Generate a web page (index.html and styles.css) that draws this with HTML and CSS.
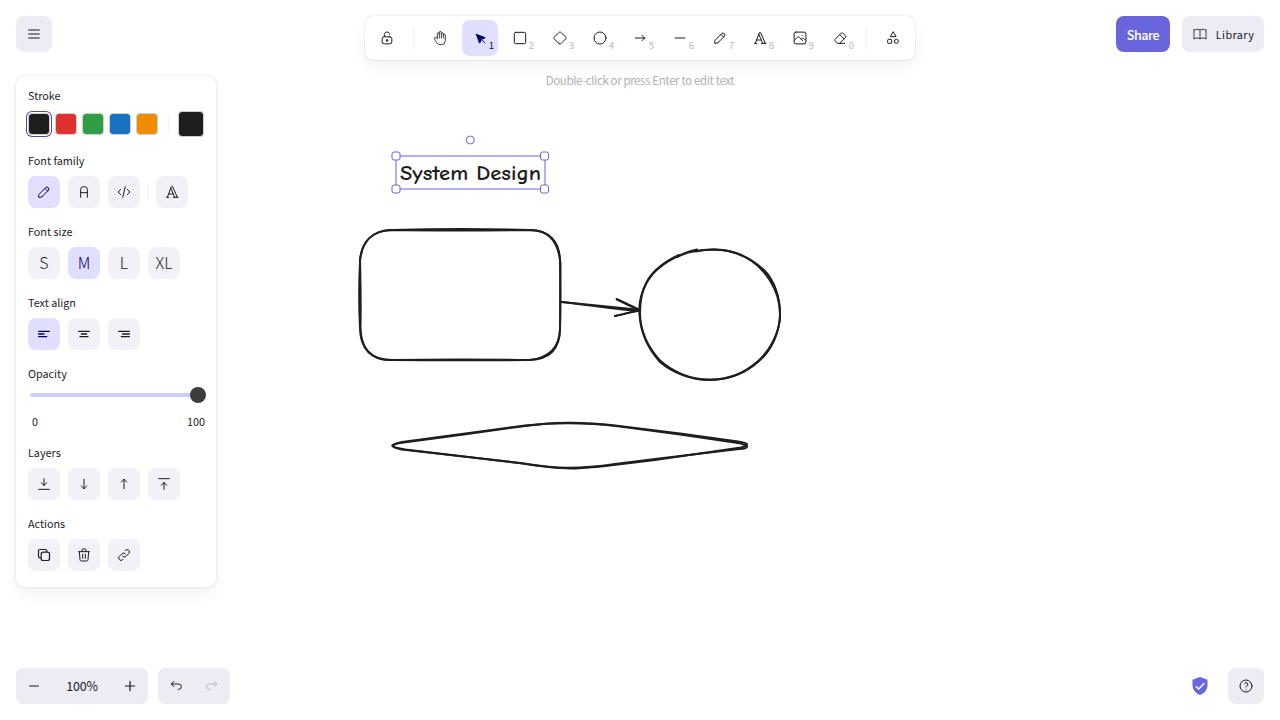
FILE: index.html
```
<!DOCTYPE html>
<html lang="en">
<head>
<meta charset="utf-8">
<title>Whiteboard</title>
<link rel="stylesheet" href="styles.css">
</head>
<body>

<svg class="board" width="1280" height="720" viewBox="0 0 1280 720">
	<!-- rounded box -->
	<g class="sketch">
		<path d="M392 230 C440 228.600 490 228.800 529 230 C549 230 560 241 560 262 C560.500 285 560.500 307 560 328 C560 349 549 360 528 360 C480 360.500 437 360.500 392 360 C371 360 360.500 349 360 328 C358.800 304 359 281 360 262 C361 242 372 230.500 392 230"/>
		<path d="M390 230 C440 230.800 490 230.500 532 230 C551 231 559 244 560.500 264 C560 287 560.500 310 560 330 C559 350 547 358 530 360 C480 359.200 437 359.200 390 360 C370 360 360 347 360.500 326 C361 304 360.500 281 360 260 C362 241 373 231 390 230"/>
	</g>
	<!-- arrow -->
	<g class="sketch">
		<path d="M560 301.700 C584 304.500 611 308.500 638 311"/>
		<path d="M561 302 C588 304.500 613 307 640 310"/>
		<path d="M616.500 299 C624 302.500 631 306 639 309.500"/>
		<path d="M617 299.500 C625 303 632 307 640 311"/>
		<path d="M615 316 C623 314.500 631 312 639 310"/>
		<path d="M615 316 C624 313.500 631 312.500 640 310.500"/>
	</g>
	<!-- circle -->
	<g class="sketch">
		<path d="M677.500 257 C688 251 701 249.500 714 249.500 C733 250 751 258 764 270 C775 281 780 298 780 314 C780 331 772 350 759 361 C746 373 728 380 709 380 C691 380 673 373 660 362 C649 350 641 334 639.500 315 C638 298 645 281 656 270.500 C666 261.500 675 257 683 254 C687 252 692 250.500 697 249.500"/>
		<path d="M695.500 251.500 C708 249 724 249 736 253 C750 258 762 267.500 770 280.500 C776 290 780.500 303 780 317 C779 333 770 351 757 362 C743 374 726 380 709 379.500 C690 379.500 672 371.500 659.500 360 C648 347 640 330 640 313 C640 295 644 281 656 270 C663 263.500 671 258.500 679 255"/>
	</g>
	<!-- diamond -->
	<g class="sketch">
		<path d="M400 443 L460 435 L521 426.500 C556 422 579 421.500 615 425.500 L680 433.500 L738 441.500 C749 443 750 445 741 447.500 L655 460 L622 464 C574 470 565 470 523 463.500 L405 449.500 C389 447 389 445 400 443"/>
		<path d="M402 442 L525 425.500 C557 422 583 422 620 426.500 L680 434.500 L738 443 C750 445.500 750 448.500 739 449 L655 459 L615 464 C578 469.500 558 469 520 463 L402 449.500 C390 447 391 444 402 442"/>
	</g>
	<text class="board-title" x="400" y="179.500" textLength="141" lengthAdjust="spacingAndGlyphs">System Design</text>
	<!-- selection frame -->
	<g class="selection">
		<rect x="396" y="156" width="149" height="33"/>
		<g class="handles">
			<rect x="392" y="152" width="8" height="8" rx="2"/>
			<rect x="540.500" y="152" width="8" height="8" rx="2"/>
			<rect x="392" y="185" width="8" height="8" rx="2"/>
			<rect x="540.500" y="185" width="8" height="8" rx="2"/>
			<circle cx="470.300" cy="140" r="4"/>
		</g>
	</g>
</svg>

<div class="ui">
	<div class="top">
		<div class="left">
			<button class="btn" aria-label="Menu"><svg class="icon w15" viewBox="0 0 24 24"><path d="M4 6h16M4 12h16M4 18h16"/></svg></button>

			<div class="panel island">
				<h3>Stroke</h3>
				<div class="swatches">
					<span class="swatch black active"></span>
					<span class="swatch red"></span>
					<span class="swatch green"></span>
					<span class="swatch blue"></span>
					<span class="swatch orange"></span>
					<span class="line"></span>
					<span class="swatch black current"></span>
				</div>

				<h3>Font family</h3>
				<div class="row">
					<button class="opt on"><svg class="icon" viewBox="0 0 20 20"><path d="m7.643 15.690 7.774-7.773a2.357 2.357 0 1 0-3.334-3.334L4.310 12.357a3.333 3.333 0 0 0-.977 2.357v1.953h1.953c.884 0 1.732-.352 2.357-.977ZM11.250 5.417l3.333 3.333"/></svg></button>
					<button class="opt"><svg class="icon" viewBox="0 0 20 20"><path d="M5.833 16.667v-10a3.333 3.333 0 0 1 3.334-3.334h1.666a3.333 3.333 0 0 1 3.334 3.334v10M5.833 10.833h8.334"/></svg></button>
					<button class="opt"><svg class="icon w15" viewBox="0 0 24 24"><path d="M7 8l-4 4l4 4M17 8l4 4l-4 4M14 4l-4 16"/></svg></button>
					<span class="line"></span>
					<button class="opt"><svg class="icon w15" viewBox="0 0 24 24"><path d="M4 20h3M14 20h7M6.900 15h6.900M10.200 6.300l5.800 13.700M5 20l6-16h2l7 16"/></svg></button>
				</div>

				<h3>Font size</h3>
				<div class="row sizes">
					<button class="opt">S</button>
					<button class="opt on">M</button>
					<button class="opt">L</button>
					<button class="opt">XL</button>
				</div>

				<h3>Text align</h3>
				<div class="row">
					<button class="opt on"><svg class="icon w2" viewBox="0 0 24 24"><path d="M4 8h16M4 12h8M4 16h12"/></svg></button>
					<button class="opt"><svg class="icon w2" viewBox="0 0 24 24"><path d="M4 8h16M8 12h8M6 16h12"/></svg></button>
					<button class="opt"><svg class="icon w2" viewBox="0 0 24 24"><path d="M4 8h16M10 12h10M8 16h12"/></svg></button>
				</div>

				<h3>Opacity</h3>
				<div class="slider"><span class="thumb"></span></div>
				<div class="range"><span>0</span><span>100</span></div>

				<h3>Layers</h3>
				<div class="row">
					<button class="opt"><svg class="icon w15" viewBox="0 0 24 24"><path d="M4 20h16M12 14V4M12 14l4-4M12 14l-4-4"/></svg></button>
					<button class="opt"><svg class="icon w15" viewBox="0 0 24 24"><path d="M12 5v14M16 15l-4 4M8 15l4 4"/></svg></button>
					<button class="opt"><svg class="icon w15" viewBox="0 0 24 24"><path d="M12 5v14M16 9l-4-4M8 9l4-4"/></svg></button>
					<button class="opt"><svg class="icon w15" viewBox="0 0 24 24"><path d="M4 4h16M12 10v10M12 10l4 4M12 10l-4 4"/></svg></button>
				</div>

				<h3>Actions</h3>
				<div class="row">
					<button class="opt"><svg class="icon w15" viewBox="0 0 20 20"><path d="M14.375 6.458H8.958a2.500 2.500 0 0 0-2.500 2.500v5.417a2.500 2.500 0 0 0 2.500 2.500h5.417a2.500 2.500 0 0 0 2.500-2.500V8.958a2.500 2.500 0 0 0-2.500-2.500ZM13.542 6.458V5a1.870 1.870 0 0 0-1.875-1.875H5A1.870 1.870 0 0 0 3.125 5v6.667A1.870 1.870 0 0 0 5 13.542h1.458"/></svg></button>
					<button class="opt"><svg class="icon" viewBox="0 0 20 20"><path d="M3.333 5.833h13.334M8.333 9.167v5M11.667 9.167v5M4.167 5.833l.833 10c0 .920.746 1.667 1.667 1.667h6.666c.920 0 1.667-.746 1.667-1.667l.833-10M7.500 5.833v-2.500c0-.460.373-.833.833-.833h3.334c.460 0 .833.373.833.833v2.500"/></svg></button>
					<button class="opt"><svg class="icon" viewBox="0 0 20 20"><path d="M8.333 11.667a2.917 2.917 0 0 0 4.167 0l3.333-3.334a2.946 2.946 0 1 0-4.166-4.166l-.417.416M11.667 8.333a2.917 2.917 0 0 0-4.167 0l-3.333 3.334a2.946 2.946 0 0 0 4.166 4.166l.417-.416"/></svg></button>
				</div>
			</div>
		</div>

		<div class="center">
			<div class="toolbar island">
				<button class="tool"><svg class="icon" viewBox="0 0 20 20"><path d="M13.542 8.542H6.458a2.500 2.500 0 0 0-2.500 2.500v3.750a2.500 2.500 0 0 0 2.500 2.500h7.084a2.500 2.500 0 0 0 2.500-2.500v-3.750a2.500 2.500 0 0 0-2.500-2.500ZM10 13.958a1.042 1.042 0 1 0 0-2.083 1.042 1.042 0 0 0 0 2.083ZM6.667 8.333V5.417C6.667 3.806 8.159 2.500 10 2.500c1.841 0 3.333 1.306 3.333 2.917"/></svg></button>
				<span class="line"></span>
				<div class="tools">
					<button class="tool"><svg class="icon" viewBox="0 0 24 24"><path d="M8 13V5.500a1.500 1.500 0 0 1 3 0V12M11 5.500v-2a1.500 1.500 0 1 1 3 0V12M14 5.500a1.500 1.500 0 0 1 3 0V12M17 7.500a1.500 1.500 0 0 1 3 0V16a6 6 0 0 1-6 6h-2h.208a6 6 0 0 1-5.012-2.700L7 19c-.312-.479-1.407-2.388-3.286-5.728a1.500 1.500 0 0 1 .536-2.022a1.867 1.867 0 0 1 2.280.280L8 13"/></svg></button>
					<button class="tool on"><svg class="icon solid" viewBox="0 0 22 22"><path d="M6 6l4.153 11.793a.365.365 0 0 0 .331.207a.366.366 0 0 0 .332-.207L13 13l4.787-1.994a.355.355 0 0 0 .213-.323a.355.355 0 0 0-.213-.323L6 6zM13.500 13.500L18 18"/></svg><span class="key">1</span></button>
					<button class="tool"><svg class="icon w15" viewBox="0 0 24 24"><rect x="3.500" y="3.500" width="17" height="17" rx="2"/></svg><span class="key">2</span></button>
					<button class="tool"><svg class="icon w15" viewBox="0 0 24 24"><path d="M10.500 20.400l-6.900-6.900c-.781-.781-.781-2.219 0-3l6.900-6.900c.781-.781 2.219-.781 3 0l6.900 6.900c.781.781.781 2.219 0 3l-6.900 6.900c-.781.781-2.219.781-3 0z"/></svg><span class="key">3</span></button>
					<button class="tool"><svg class="icon w15" viewBox="0 0 24 24"><circle cx="12" cy="12" r="9"/></svg><span class="key">4</span></button>
					<button class="tool"><svg class="icon w15" viewBox="0 0 24 24"><path d="M5 12h14M15 16l4-4M15 8l4 4"/></svg><span class="key">5</span></button>
					<button class="tool"><svg class="icon w15" viewBox="0 0 20 20"><path d="M4.167 10h11.666"/></svg><span class="key">6</span></button>
					<button class="tool"><svg class="icon" viewBox="0 0 20 20"><path d="m7.643 15.690 7.774-7.773a2.357 2.357 0 1 0-3.334-3.334L4.310 12.357a3.333 3.333 0 0 0-.977 2.357v1.953h1.953c.884 0 1.732-.352 2.357-.977ZM11.250 5.417l3.333 3.333"/></svg><span class="key">7</span></button>
					<button class="tool"><svg class="icon w15" viewBox="0 0 24 24"><path d="M4 20h3M14 20h7M6.900 15h6.900M10.200 6.300l5.800 13.700M5 20l6-16h2l7 16"/></svg><span class="key">8</span></button>
					<button class="tool"><svg class="icon" viewBox="0 0 20 20"><path d="M12.500 6.667h.010M4.910 2.625h10.180a2.284 2.284 0 0 1 2.285 2.284v10.182a2.284 2.284 0 0 1-2.284 2.284H4.909a2.284 2.284 0 0 1-2.284-2.284V4.909a2.284 2.284 0 0 1 2.284-2.284ZM3.333 12.500l3.334-3.333c.773-.745 1.726-.745 2.500 0l4.166 4.166M11.667 11.667l.833-.834c.774-.744 1.726-.744 2.500 0l1.667 1.667"/></svg><span class="key">9</span></button>
					<button class="tool"><svg class="icon w15" viewBox="0 0 24 24"><path d="M19 20H8.500l-4.210-4.300a1 1 0 0 1 0-1.410l10-10a1 1 0 0 1 1.410 0l5 5a1 1 0 0 1 0 1.410L11.500 20M18 13.300L11.700 7"/></svg><span class="key">0</span></button>
				</div>
				<span class="line"></span>
				<button class="tool"><svg class="icon w15" viewBox="0 0 24 24"><path d="M12 3l-4 7h8zM14 17a3 3 0 1 0 6 0a3 3 0 1 0-6 0M4 15a1 1 0 0 1 1-1h4a1 1 0 0 1 1 1v4a1 1 0 0 1-1 1H5a1 1 0 0 1-1-1z"/></svg></button>
			</div>
			<div class="hint">Double-click or press Enter to edit text</div>
		</div>

		<div class="right">
			<button class="btn share">Share</button>
			<button class="btn library"><svg class="icon" viewBox="0 0 24 24"><path d="M3 19a9 9 0 0 1 9 0a9 9 0 0 1 9 0M3 6a9 9 0 0 1 9 0a9 9 0 0 1 9 0M3 6v13M12 6v13M21 6v13"/></svg>Library</button>
		</div>
	</div>

	<div class="bottom">
		<div class="group">
			<button class="btn"><svg class="icon w15" viewBox="0 0 20 20"><path d="M4.500 10h11"/></svg></button>
			<span class="zoom">100%</span>
			<button class="btn"><svg class="icon w15" viewBox="0 0 20 20"><path d="M4.167 10h11.666M10 4.167v11.666"/></svg></button>
		</div>
		<div class="group">
			<button class="btn"><svg class="icon" viewBox="0 0 20 20"><path d="M7.500 10.833L4.167 7.500L7.500 4.167M4.167 7.500h9.166a3.333 3.333 0 0 1 0 6.667H12.500"/></svg></button>
			<button class="btn off"><svg class="icon" viewBox="0 0 20 20"><path d="M12.500 10.833L15.833 7.500L12.500 4.167M15.833 7.500H6.667a3.333 3.333 0 1 0 0 6.667H7.500"/></svg></button>
		</div>
		<svg class="shield" viewBox="0 0 16 18"><path class="body" d="M8 0 L15.500 2.800 V8 C15.500 12.800 12.300 16.300 8 18 C3.700 16.300 .5 12.800 .5 8 V2.800 Z"/><path class="check" d="M3.700 9.200 L6.700 12 L12.300 6.200"/></svg>
		<button class="btn"><svg class="icon w15" viewBox="0 0 24 24"><path d="M12 17v.010M12 13.500a1.500 1.500 0 0 1 1-1.500a2.600 2.600 0 1 0-3-4"/><circle cx="12" cy="12" r="9"/></svg></button>
	</div>
</div>

</body>
</html>
```
FILE: styles.css
```
body {
	margin: 0;
	background: #fff;
	color: #1b1b1f;
	font-family: "Noto Sans CJK SC", "Noto Sans", sans-serif;
	font-size: 11px;
	overflow: hidden;
}

/* drawing */
.board {
	position: absolute;
	top: 0;
	left: 0;
}

.sketch path {
	fill: none;
	stroke: #1e1e1e;
	stroke-width: 2;
	stroke-linecap: round;
}

.board-title {
	font-family: "Comic Neue", Lato, sans-serif;
	font-size: 20px;
	font-weight: 600;
	fill: #1e1e1e;
}

.selection rect, .selection circle {
	fill: none;
	stroke: #6965db;
	stroke-width: 1;
}

.selection .handles rect, .selection .handles circle {
	fill: #fff;
}

/* interface */
.ui {
	position: relative;
	box-sizing: border-box;
	height: 720px;
	padding: 16px;
	display: flex;
	flex-direction: column;
	justify-content: space-between;
}

.top {
	display: grid;
	grid-template-columns: 1fr auto 1fr;
	align-items: start;
}

.island {
	background: #fff;
	box-shadow: 0 0 1px rgba(0,0,0,.17), 0 0 3px rgba(0,0,0,.08), 0 7px 14px rgba(0,0,0,.05);
}

button {
	border: 0;
	padding: 0;
	font: inherit;
	color: inherit;
	display: flex;
	align-items: center;
	justify-content: center;
}

.icon {
	width: 16px;
	height: 16px;
	fill: none;
	stroke: currentColor;
	stroke-width: 1.25;
	stroke-linecap: round;
	stroke-linejoin: round;
}

.w15 { stroke-width: 1.5; }
.w2 { stroke-width: 2; }
.solid { fill: currentColor; }

.btn {
	width: 36px;
	height: 36px;
	border-radius: 8px;
	background: #ececf4;
}

.line {
	width: 1px;
	background: #f1f0ff;
}

/* properties panel */
.panel {
	box-sizing: border-box;
	width: 200px;
	margin-top: 24px;
	padding: 10px 12px 16px;
	border-radius: 8px;
}

h3 {
	margin: 14px 0 7px;
	font-size: 10.8px;
	font-weight: 400;
	line-height: 18px;
}

h3:first-child {
	margin-top: 0;
}

.row {
	display: flex;
	align-items: center;
	gap: 8px;
}

.row .line {
	height: 16px;
	margin: 0 -1px 0 0;
}

.opt {
	width: 32px;
	height: 32px;
	border-radius: 8px;
	background: #f2f1f7;
}

.on {
	background: #e0dfff;
	color: #030064;
}

.sizes .opt {
	padding-bottom: 2px;
	font-size: 16px;
	font-weight: 300;
	line-height: 30px;
}

.swatches {
	display: flex;
	align-items: center;
	gap: 5px;
	height: 26px;
}

.swatch {
	box-sizing: border-box;
	width: 22px;
	height: 22px;
	border: 1px solid #d0d0d4;
	border-radius: 4px;
}

.black { background: #1e1e1e; }
.red { background: #e03131; }
.green { background: #2f9e44; }
.blue { background: #1971c2; }
.orange { background: #f08c00; }

.active {
	box-shadow: 0 0 0 1px #fff, 0 0 0 2px #4a47b1;
}

.swatches .line {
	height: 16px;
	margin: 0 4px 0 5px;
}

.current {
	width: 26px;
	height: 26px;
}

.slider {
	display: flex;
	align-items: center;
	justify-content: flex-end;
	width: 176px;
	height: 4px;
	margin: 11px 0 17px 2px;
	border-radius: 2px;
	background: #cecbff;
}

.thumb {
	width: 16px;
	height: 16px;
	border-radius: 50%;
	background: #3d3d3d;
}

.range {
	display: flex;
	justify-content: space-between;
	line-height: 14px;
	font-size: 10.8px;
	padding: 0 0 1px 4px;
	margin-right: -1px;
}

/* toolbar */
.center {
	display: flex;
	flex-direction: column;
	align-items: center;
}

.toolbar {
	display: flex;
	align-items: center;
	gap: 8px;
	padding: 4px;
	border-radius: 8px;
}

.toolbar .line {
	height: 24px;
}

.tools {
	display: flex;
	gap: 4px;
}

.tool {
	position: relative;
	width: 36px;
	height: 36px;
	border-radius: 8px;
	background: none;
}

.tool.on {
	background: #e0dfff;
}

.key {
	position: absolute;
	right: 4px;
	bottom: 5px;
	font-size: 9.5px;
	line-height: 12px;
	color: #b8b8b8;
}

.on .key {
	color: #030064;
}

.hint {
	margin-top: 11px;
	font-size: 11.5px;
	letter-spacing: -.38px;
	line-height: 18px;
	color: #b0b0b0;
}

.right {
	display: flex;
	justify-content: flex-end;
	gap: 12px;
}

.share {
	width: 54px;
	background: #6965db;
	color: #fff;
	font-size: 12.5px;
	font-weight: 500;
	letter-spacing: -.4px;
}

.library {
	width: 82px;
	gap: 8px;
	font-size: 10.8px;
	letter-spacing: .4px;
}

/* footer */
.bottom {
	display: flex;
	align-items: center;
	gap: 10px;
}

.group {
	display: flex;
	align-items: center;
	border-radius: 8px;
	background: #ececf4;
}

.zoom {
	width: 60px;
	padding-bottom: 1px;
	text-align: center;
	font-size: 12.5px;
	letter-spacing: -.2px;
}

.off {
	color: #b8b8bd;
}

.shield {
	width: 16px;
	height: 18px;
	margin: 0 10.5px 0 auto;
}

.shield .body {
	fill: #6965db;
}

.shield .check {
	fill: none;
	stroke: #fff;
	stroke-width: 1.5;
}
```
